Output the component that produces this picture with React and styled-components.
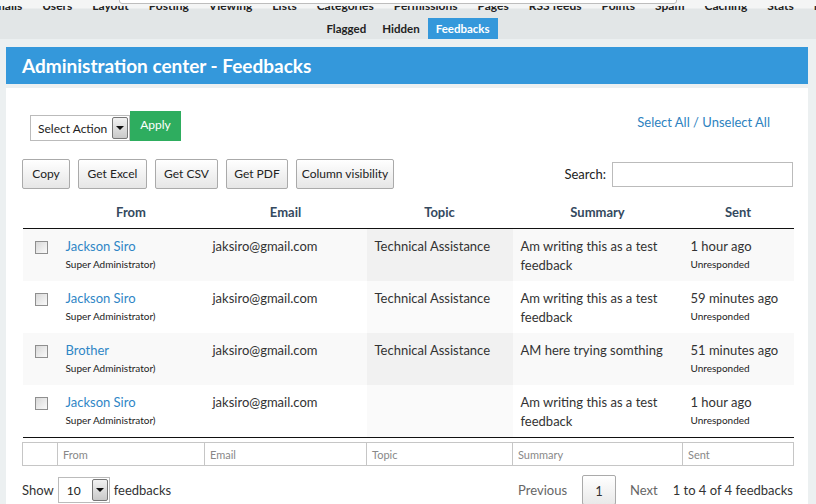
import React from "react";
import styled, { createGlobalStyle } from "styled-components";

const GlobalStyle = createGlobalStyle`
  html, body {
    margin: 0;
    padding: 0;
    background: #ecf0f1;
    overflow: hidden;
  }
  body {
    font-family: "Lato", "Open Sans", sans-serif;
    color: #333;
  }
`;

const TopBar = styled.div`
  position: relative;
  box-sizing: border-box;
  height: 39px;
  padding-top: 6px;
  background: linear-gradient(#f4f5f5 0, #f4f5f5 8px, #e2e6e7 9px);
`;

const SearchStub = styled.div`
  position: absolute;
  left: 119px;
  top: -20px;
  width: 556px;
  height: 22px;
  background: #fff;
  border: 1px solid #bdbdbd;
  border-radius: 0 0 3px 3px;
`;

const ClippedNav = styled.div`
  height: 6px;
  overflow: hidden;
  display: flex;
  gap: 20px;
  margin-left: -12px;
  white-space: nowrap;
`;

const NavItem = styled.span`
  font-size: 12px;
  font-weight: 700;
  color: #222;
  line-height: 12px;
  margin-top: -6px;
`;

const TabRow = styled.div`
  display: flex;
  justify-content: center;
  margin-top: 6px;
  height: 21px;
`;

const Tab = styled.div`
  padding: 0 8px;
  font-size: 11.5px;
  font-weight: 700;
  line-height: 21px;
  color: ${(p) => (p.$active ? "#fff" : "#222")};
  background: ${(p) => (p.$active ? "#3498db" : "transparent")};
`;

const Main = styled.div`
  padding: 8px 8px 0 6px;
`;

const TitleBar = styled.div`
  height: 37px;
  background: #3498db;
  color: #fff;
  font-size: 19px;
  font-weight: 700;
  line-height: 37px;
  padding-left: 16px;
`;

const Panel = styled.div`
  margin-top: 4px;
  background: #fff;
  padding: 23px 15px 20px 16px;
`;

const ActionRow = styled.div`
  display: flex;
  align-items: flex-end;
  justify-content: space-between;
  padding: 0 23px 0 8px;
  height: 30px;
`;

const ActionGroup = styled.div`
  display: flex;
  align-items: flex-end;
`;

const SelectBox = styled.div`
  display: flex;
  align-items: center;
  box-sizing: border-box;
  width: ${(p) => p.$w}px;
  height: ${(p) => p.$h}px;
  border: 1px solid #bbb;
  background: #fff;
  font-size: ${(p) => p.$fs}px;
  color: #222;
  padding-left: ${(p) => p.$pl}px;
  padding-right: 1px;
`;

const SelectText = styled.span`
  flex: 1;
`;

const SelectArrow = styled.span`
  display: flex;
  align-items: center;
  justify-content: center;
  box-sizing: border-box;
  width: 16px;
  height: calc(100% - 2px);
  border: 1px solid #777;
  border-radius: 2px;
  background: linear-gradient(#f2f2f2, #c9c9c9);
  &::after {
    content: "";
    border-left: 4px solid transparent;
    border-right: 4px solid transparent;
    border-top: 4px solid #111;
  }
`;

const ApplyButton = styled.div`
  width: 51px;
  height: 30px;
  background: #2ead5f;
  color: #fff;
  font-size: 12px;
  text-align: center;
  line-height: 27px;
`;

const SelectLinks = styled.div`
  font-size: 13px;
  color: #2d82c0;
  margin-bottom: 11px;
`;

const ToolRow = styled.div`
  display: flex;
  align-items: center;
  justify-content: space-between;
  margin-top: 18px;
`;

const ButtonGroup = styled.div`
  display: flex;
  gap: 8px;
`;

const ExportButton = styled.div`
  box-sizing: border-box;
  width: ${(p) => p.$w}px;
  height: 30px;
  border: 1px solid #aaa;
  border-radius: 2px;
  background: linear-gradient(#ffffff, #e6e6e6);
  font-size: 12px;
  color: #222;
  text-align: center;
  line-height: 28px;
`;

const SearchWrap = styled.label`
  display: flex;
  align-items: center;
  gap: 6px;
  font-size: 13px;
  color: #222;
`;

const SearchInput = styled.div`
  box-sizing: border-box;
  width: 181px;
  height: 25px;
  border: 1px solid #bbb;
`;

const Table = styled.table`
  width: 771px;
  border-collapse: collapse;
  table-layout: fixed;
  margin-top: 6px;
`;

const Th = styled.th`
  font-size: 13px;
  font-weight: 700;
  color: #34495e;
  height: 33px;
  padding: 0 8px;
  border-bottom: 1px solid #111;
  text-align: center;
`;

const Row = styled.tr`
  background: ${(p) => (p.$odd ? "#f9f9f9" : "#fff")};
  & + & td {
    border-top: 1px solid #ddd;
  }
`;

const Td = styled.td`
  vertical-align: top;
  padding: 8px 8px 0;
  height: 44px;
  font-size: 13px;
  line-height: 19px;
  color: #333;
  background: ${(p) => (p.$sorted ? (p.$odd ? "#f1f1f1" : "#fafafa") : "transparent")};
`;

const LastRow = styled.tr`
  td {
    border-bottom: 1px solid #111;
  }
`;

const Check = styled.span`
  display: block;
  width: 11px;
  height: 11px;
  margin: 4px 0 0 4px;
  border: 1px solid #8f8f8f;
  background: linear-gradient(135deg, #d8d8d8, #fafafa);
`;

const NameLink = styled.div`
  color: #2f86c6;
`;

const SubText = styled.div`
  font-size: 10px;
  line-height: 15px;
  color: #222;
  margin-top: 1px;
`;

const SpacerRow = styled.tr`
  height: 5px;
`;

const FilterCell = styled.td`
  height: 22px;
  border: 1px solid #c6c6c6;
  padding: 0 5px;
  font-size: 11px;
  color: #888;
`;

const BottomRow = styled.div`
  display: flex;
  align-items: center;
  justify-content: space-between;
  margin-top: 9px;
  font-size: 13px;
  color: #333;
`;

const ShowGroup = styled.div`
  display: flex;
  align-items: center;
  gap: 4px;
`;

const Pager = styled.div`
  display: flex;
  align-items: center;
`;

const PageLink = styled.span`
  color: #666;
  padding: 0 15px 0 14px;
`;

const PageBox = styled.span`
  box-sizing: border-box;
  width: 34px;
  height: 30px;
  border: 1px solid #aaa;
  border-radius: 2px;
  background: linear-gradient(#ffffff, #e9e9e9);
  text-align: center;
  line-height: 30px;
  color: #333;
`;

const navItems = [
  "Emails", "Users", "Layout", "Posting", "Viewing", "Lists", "Categories",
  "Permissions", "Pages", "RSS feeds", "Points", "Spam", "Caching", "Stats",
  "Mailing", "Plugins", "Moderate",
];

const feedbacks = [
  { name: "Jackson Siro", topic: "Technical Assistance", summary: "Am writing this as a test feedback", sent: "1 hour ago" },
  { name: "Jackson Siro", topic: "Technical Assistance", summary: "Am writing this as a test feedback", sent: "59 minutes ago" },
  { name: "Brother", topic: "Technical Assistance", summary: "AM here trying somthing", sent: "51 minutes ago" },
  { name: "Jackson Siro", topic: "", summary: "Am writing this as a test feedback", sent: "1 hour ago" },
];

const exportButtons = [
  { label: "Copy", w: 48 },
  { label: "Get Excel", w: 69 },
  { label: "Get CSV", w: 63 },
  { label: "Get PDF", w: 62 },
  { label: "Column visibility", w: 98 },
];

function FeedbackRow({ item, index }) {
  const odd = index % 2 === 0;
  const cells = (
    <>
      <Td $odd={odd}><Check /></Td>
      <Td $odd={odd}>
        <NameLink>{item.name}</NameLink>
        <SubText>Super Administrator)</SubText>
      </Td>
      <Td $odd={odd}>jaksiro@gmail.com</Td>
      <Td $odd={odd} $sorted>{item.topic}</Td>
      <Td $odd={odd}>{item.summary}</Td>
      <Td $odd={odd}>
        <div>{item.sent}</div>
        <SubText>Unresponded</SubText>
      </Td>
    </>
  );
  if (index === feedbacks.length - 1) {
    return <LastRow as={Row} $odd={odd}>{cells}</LastRow>;
  }
  return <Row $odd={odd}>{cells}</Row>;
}

export default function App() {
  return (
    <>
      <GlobalStyle />
      <TopBar>
        <SearchStub />
        <ClippedNav>
          {navItems.map((n) => (
            <NavItem key={n}>{n}</NavItem>
          ))}
        </ClippedNav>
        <TabRow>
          <Tab>Flagged</Tab>
          <Tab>Hidden</Tab>
          <Tab $active>Feedbacks</Tab>
        </TabRow>
      </TopBar>
      <Main>
        <TitleBar>Administration center - Feedbacks</TitleBar>
        <Panel>
          <ActionRow>
            <ActionGroup>
              <SelectBox $w={100} $h={26} $fs={12} $pl={7}>
                <SelectText>Select Action</SelectText>
                <SelectArrow />
              </SelectBox>
              <ApplyButton>Apply</ApplyButton>
            </ActionGroup>
            <SelectLinks>Select All / Unselect All</SelectLinks>
          </ActionRow>

          <ToolRow>
            <ButtonGroup>
              {exportButtons.map((b) => (
                <ExportButton key={b.label} $w={b.w}>{b.label}</ExportButton>
              ))}
            </ButtonGroup>
            <SearchWrap>
              Search:
              <SearchInput />
            </SearchWrap>
          </ToolRow>

          <Table>
            <colgroup>
              <col style={{ width: 35 }} />
              <col style={{ width: 147 }} />
              <col style={{ width: 162 }} />
              <col style={{ width: 146 }} />
              <col style={{ width: 170 }} />
              <col style={{ width: 111 }} />
            </colgroup>
            <thead>
              <tr>
                <Th />
                <Th>From</Th>
                <Th>Email</Th>
                <Th>Topic</Th>
                <Th>Summary</Th>
                <Th>Sent</Th>
              </tr>
            </thead>
            <tbody>
              {feedbacks.map((f, i) => (
                <FeedbackRow key={i} item={f} index={i} />
              ))}
            </tbody>
            <tfoot>
              <SpacerRow><td colSpan={6} /></SpacerRow>
              <tr>
                <FilterCell />
                <FilterCell>From</FilterCell>
                <FilterCell>Email</FilterCell>
                <FilterCell>Topic</FilterCell>
                <FilterCell>Summary</FilterCell>
                <FilterCell>Sent</FilterCell>
              </tr>
            </tfoot>
          </Table>

          <BottomRow>
            <ShowGroup>
              Show
              <SelectBox $w={52} $h={26} $fs={12} $pl={8}>
                <SelectText>10</SelectText>
                <SelectArrow />
              </SelectBox>
              feedbacks
            </ShowGroup>
            <Pager>
              <PageLink>Previous</PageLink>
              <PageBox>1</PageBox>
              <PageLink>Next</PageLink>
              <span>1 to 4 of 4 feedbacks</span>
            </Pager>
          </BottomRow>
        </Panel>
      </Main>
    </>
  );
}
